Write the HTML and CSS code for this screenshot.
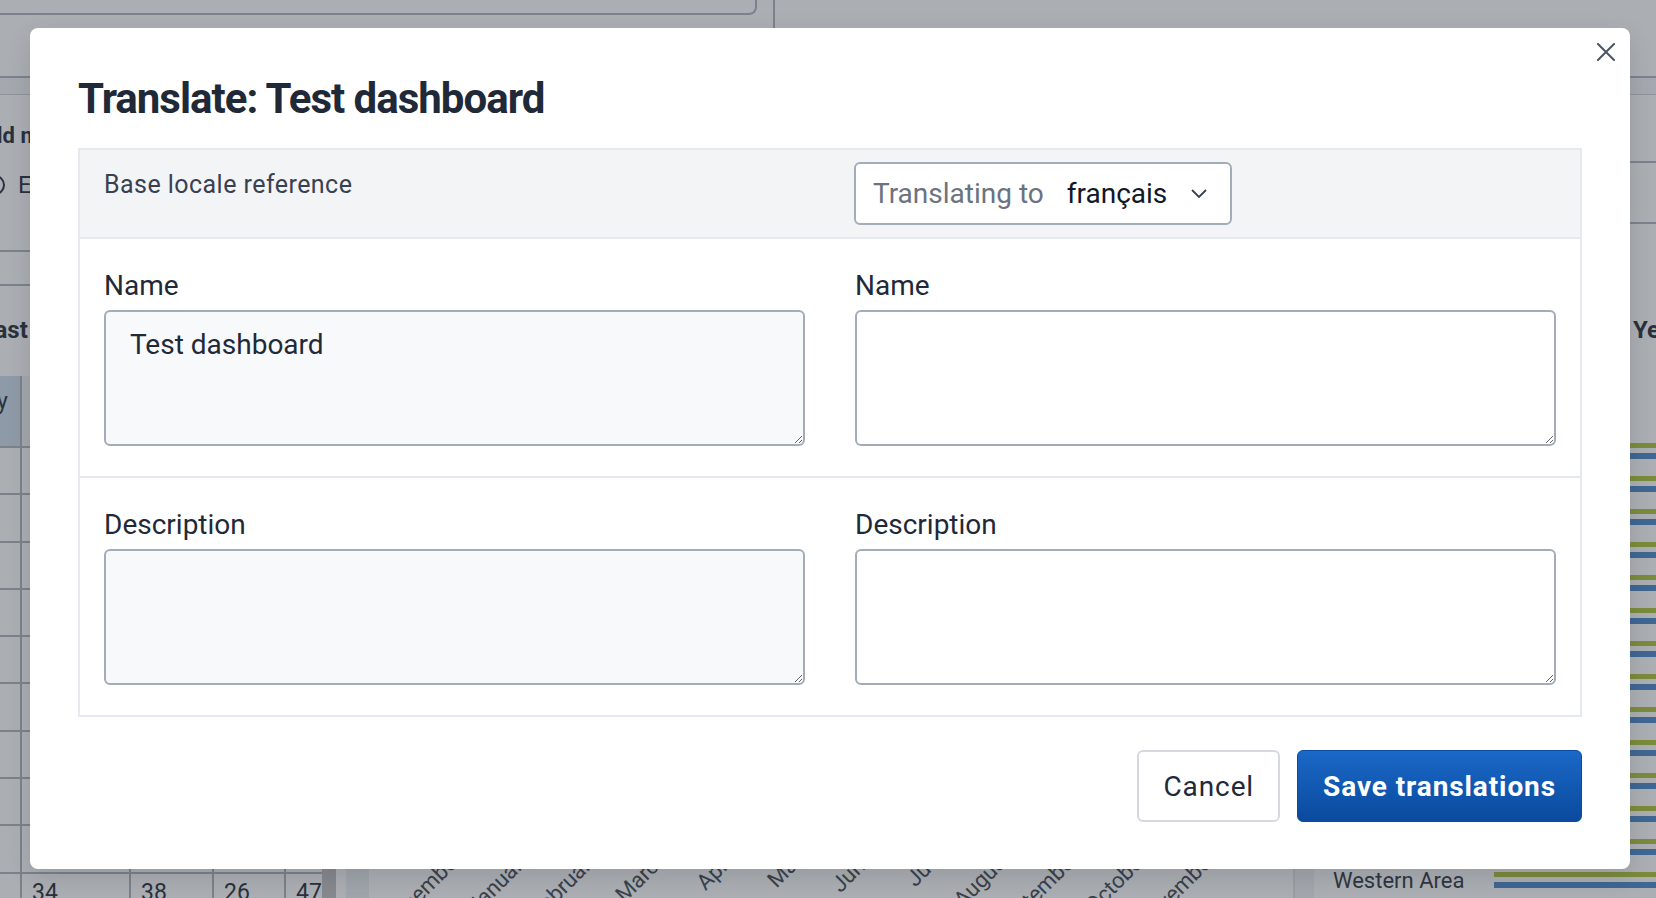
FILE: index.html
```html
<!DOCTYPE html>
<html lang="en">
<head>
<meta charset="utf-8">
<title>Translate: Test dashboard</title>
<link rel="stylesheet" href="styles.css">
</head>
<body>
<div class="dash" aria-hidden="true">
  <div class="dash-top">
    <div class="searchbox"></div>
    <div class="vline"></div>
  </div>
  <div class="tabband"></div>
  <div class="filters">
    <div class="filter-left">
      <div class="f-label">Field name</div>
      <div class="f-radio"><span class="radio"></span>Exact match</div>
      <div class="f-box"></div>
    </div>
    <div class="filter-right">
      <div class="r-box"></div>
    </div>
  </div>
  <div class="panels">
    <div class="tbl-panel">
      <div class="tbl-main">
        <div class="p-title">Forecast</div>
        <div class="tbl">
          <div class="tr th"><div class="td c0"><span>Category</span></div><div class="td c1">Jan</div><div class="td c2">Feb</div><div class="td c3">Mar</div><div class="td c4">Apr</div></div>
          <div class="tr"><div class="td c0"></div><div class="td c1">10</div><div class="td c2">16</div><div class="td c3">20</div><div class="td c4">28</div></div>
          <div class="tr"><div class="td c0"></div><div class="td c1">12</div><div class="td c2">18</div><div class="td c3">21</div><div class="td c4">30</div></div>
          <div class="tr"><div class="td c0"></div><div class="td c1">15</div><div class="td c2">22</div><div class="td c3">19</div><div class="td c4">28</div></div>
          <div class="tr"><div class="td c0"></div><div class="td c1">20</div><div class="td c2">25</div><div class="td c3">17</div><div class="td c4">33</div></div>
          <div class="tr"><div class="td c0"></div><div class="td c1">22</div><div class="td c2">27</div><div class="td c3">23</div><div class="td c4">35</div></div>
          <div class="tr"><div class="td c0"></div><div class="td c1">25</div><div class="td c2">29</div><div class="td c3">24</div><div class="td c4">38</div></div>
          <div class="tr"><div class="td c0"></div><div class="td c1">27</div><div class="td c2">31</div><div class="td c3">22</div><div class="td c4">40</div></div>
          <div class="tr"><div class="td c0"></div><div class="td c1">29</div><div class="td c2">33</div><div class="td c3">25</div><div class="td c4">42</div></div>
          <div class="tr"><div class="td c0"></div><div class="td c1">31</div><div class="td c2">35</div><div class="td c3">24</div><div class="td c4">44</div></div>
          <div class="tr"><div class="td c0"></div><div class="td c1">34</div><div class="td c2">38</div><div class="td c3">26</div><div class="td c4">47</div></div>
        </div>
      </div>
      <div class="scrollbar"></div>
    </div>
    <div class="chart-panel">
      <div class="axis-strip"></div>
      <div class="chart-area">
        <div class="chart-space"></div>
        <div class="months">
          <div class="m"><span>December</span></div>
          <div class="m"><span>January</span></div>
          <div class="m"><span>February</span></div>
          <div class="m"><span>March</span></div>
          <div class="m"><span>April</span></div>
          <div class="m"><span>May</span></div>
          <div class="m"><span>June</span></div>
          <div class="m"><span>July</span></div>
          <div class="m"><span>August</span></div>
          <div class="m"><span>September</span></div>
          <div class="m"><span>October</span></div>
          <div class="m"><span>November</span></div>
        </div>
      </div>
    </div>
    <div class="bar-panel">
      <div class="bar-strip"></div>
      <div class="bar-main">
        <div class="p-title yr">Year over year</div>
        <div class="brow"><div class="blabel">Bo</div><div class="bars"><div class="bar g"></div><div class="bar b"></div></div></div>
        <div class="brow"><div class="blabel">Bombali</div><div class="bars"><div class="bar g"></div><div class="bar b"></div></div></div>
        <div class="brow"><div class="blabel">Bonthe</div><div class="bars"><div class="bar g"></div><div class="bar b"></div></div></div>
        <div class="brow"><div class="blabel">Kailahun</div><div class="bars"><div class="bar g"></div><div class="bar b"></div></div></div>
        <div class="brow"><div class="blabel">Kambia</div><div class="bars"><div class="bar g"></div><div class="bar b"></div></div></div>
        <div class="brow"><div class="blabel">Kenema</div><div class="bars"><div class="bar g"></div><div class="bar b"></div></div></div>
        <div class="brow"><div class="blabel">Koinadugu</div><div class="bars"><div class="bar g"></div><div class="bar b"></div></div></div>
        <div class="brow"><div class="blabel">Kono</div><div class="bars"><div class="bar g"></div><div class="bar b"></div></div></div>
        <div class="brow"><div class="blabel">Moyamba</div><div class="bars"><div class="bar g"></div><div class="bar b"></div></div></div>
        <div class="brow"><div class="blabel">Port Loko</div><div class="bars"><div class="bar g"></div><div class="bar b"></div></div></div>
        <div class="brow"><div class="blabel">Pujehun</div><div class="bars"><div class="bar g"></div><div class="bar b"></div></div></div>
        <div class="brow"><div class="blabel">Tonkolili</div><div class="bars"><div class="bar g"></div><div class="bar b"></div></div></div>
        <div class="brow"><div class="blabel">Urban</div><div class="bars"><div class="bar g"></div><div class="bar b"></div></div></div>
        <div class="brow"><div class="blabel">Western Area</div><div class="bars"><div class="bar g"></div><div class="bar b"></div></div></div>
      </div>
    </div>
  </div>
</div>

<div class="overlay">
  <div class="modal" role="dialog" aria-labelledby="dlg-title">
    <button class="close" type="button" aria-label="Close">
      <svg width="18" height="18" viewBox="0 0 18 18" fill="none" stroke="#4b5563" stroke-width="2" stroke-linecap="square"><path d="M1 1 L17 17 M17 1 L1 17"/></svg>
    </button>
    <h1 class="title" id="dlg-title">Translate: Test dashboard</h1>
    <div class="panel">
      <div class="panel-head">
        <div class="base-label">Base locale reference</div>
        <div class="locale-select">
          <span class="sel-prefix">Translating to</span>
          <span class="sel-value">français</span>
          <svg class="chev" width="16" height="9" viewBox="0 0 16 9" fill="none" stroke="#374151" stroke-width="1.8"><path d="M1 1 L8 8 L15 1"/></svg>
        </div>
      </div>
      <div class="row">
        <div class="field">
          <label class="lbl">Name</label>
          <textarea class="ta ta-base" readonly>Test dashboard</textarea>
        </div>
        <div class="field">
          <label class="lbl">Name</label>
          <textarea class="ta"></textarea>
        </div>
      </div>
      <div class="row">
        <div class="field">
          <label class="lbl">Description</label>
          <textarea class="ta ta-base" readonly></textarea>
        </div>
        <div class="field">
          <label class="lbl">Description</label>
          <textarea class="ta"></textarea>
        </div>
      </div>
    </div>
    <div class="footer">
      <button class="btn btn-cancel" type="button">Cancel</button>
      <button class="btn btn-primary" type="button">Save translations</button>
    </div>
  </div>
</div>
</body>
</html>
```

FILE: styles.css
```css
* { box-sizing: border-box; }
html, body { margin: 0; padding: 0; }
body {
  width: 1656px;
  height: 898px;
  overflow: hidden;
  position: relative;
  font-family: Roboto, "Liberation Sans", Arial, sans-serif;
  background: #abafb4;
}

/* ---------- dimmed dashboard behind the dialog ---------- */
.dash {
  width: 1656px;
  height: 898px;
  overflow: hidden;
  display: flex;
  flex-direction: column;
  background: #abafb4;
  color: #2a313c;
}
.dash-top { height: 28px; display: flex; flex: none; }
.searchbox {
  width: 757px;
  height: 15px;
  border: 2px solid #7c828b;
  border-top: 0;
  border-left: 0;
  border-bottom-right-radius: 8px;
}
.vline { margin-left: 16px; width: 2px; background: #7c828b; }
.tabband {
  flex: none;
  margin-top: 48px;
  height: 19px;
  background: #a5a9af;
  border-top: 2px solid #7c828b;
  border-bottom: 1px solid #8d939b;
}
.filters { flex: none; height: 195px; display: flex; }
.filter-left { width: 774px; padding-top: 27px; }
.f-label { font-size: 22px; font-weight: 700; line-height: 28px; margin-left: -33px; }
.f-radio { margin-top: 20px; font-size: 24px; line-height: 30px; display: flex; align-items: center; gap: 13px; margin-left: -15px; }
.radio { width: 20px; height: 20px; border: 2px solid #2a313c; border-radius: 50%; }
.f-box { margin-top: 50px; height: 36px; border-top: 2px solid #7c828b; border-bottom: 2px solid #7c828b; }
.filter-right { flex: 1; padding-top: 66px; }
.r-box { height: 63px; border-top: 2px solid #7c828b; border-bottom: 2px solid #7c828b; }

.panels { flex: 1; display: flex; min-height: 0; }
.tbl-panel { width: 346px; display: flex; flex: none; }
.tbl-main { width: 322px; padding-top: 22px; overflow: hidden; }
.p-title { font-size: 24px; font-weight: 700; line-height: 36px; white-space: nowrap; margin-left: -66px; }
.tbl { margin-top: 28px; }
.tr { display: flex; height: 47.3px; border-bottom: 2px solid #7c828b; }
.th { height: 72px; background: #a3a8ae; }
.td { border-right: 2px solid #7c828b; padding: 5px 10px 0; font-size: 23px; line-height: 28px; white-space: nowrap; }
.th .td { padding-top: 12px; color: transparent; }
.c0 { width: 22px; padding: 0; }
.th .c0 {
  background: #8f9aa8;
  display: flex;
  justify-content: flex-end;
  padding: 12px 12px 0 0;
  color: #2a313c;
}
.c1 { width: 109px; }
.c2 { width: 83px; }
.c3 { width: 72px; }
.c4 { width: 36px; border-right: 0; }
.scrollbar { width: 14px; background: #86898e; }

.chart-panel { width: 947px; display: flex; flex: none; }
.axis-strip { width: 23px; background: #a0a5ac; }
.chart-area { flex: 1; display: flex; flex-direction: column; }
.chart-space { flex: 1; }
.months { height: 52px; display: flex; flex: none; }
.m { width: 68.6px; display: flex; justify-content: flex-end; }
.m span {
  display: inline-block;
  margin-right: -12px;
  font-size: 22px;
  line-height: 24px;
  color: #3a414c;
  white-space: nowrap;
  transform: rotate(-45deg);
  transform-origin: 100% 0;
}

.bar-panel { flex: 1; display: flex; }
.bar-strip { width: 21px; background: #a3a7ad; border-left: 2px solid #9a9fa6; }
.bar-main { flex: 1; padding-top: 22px; }
.yr { margin-left: 319px; margin-bottom: 87px; }
.brow { height: 33px; display: flex; }
.blabel { width: 180px; padding-left: 19px; font-size: 22px; line-height: 33px; color: #2f3642; white-space: nowrap; }
.bars { flex: 1; padding-top: 8px; display: flex; flex-direction: column; gap: 5px; }
.bar { height: 5px; width: 100%; }
.bar.g { background: #7b8b3b; }
.bar.b { height: 6px; background: #3f6792; }

/* ---------- dialog ---------- */
.overlay {
  position: absolute;
  inset: 0;
  padding: 28px 0 0 30px;
  display: flex;
  align-items: flex-start;
}
.modal {
  position: relative;
  width: 1600px;
  background: #ffffff;
  border-radius: 8px;
  padding: 46px 48px 47px;
  box-shadow: 0 8px 24px rgba(0, 0, 0, 0.12);
}
.close {
  position: absolute;
  top: 12px;
  right: 12px;
  width: 24px;
  height: 24px;
  padding: 3px;
  border: 0;
  background: none;
  display: flex;
}
.title {
  margin: 0 0 24px;
  font-size: 42px;
  line-height: 50px;
  font-weight: 700;
  letter-spacing: -1px;
  color: #1f2937;
}
.panel { border: 2px solid #e6eaef; }
.panel-head {
  display: grid;
  grid-template-columns: 1fr 1fr;
  column-gap: 50px;
  padding: 12px 24px;
  background: #f3f4f6;
  border-bottom: 2px solid #e6eaef;
}
.base-label {
  margin-top: 5px;
  font-size: 25px;
  line-height: 36px;
  letter-spacing: 0.45px;
  color: #374151;
}
.locale-select {
  width: 378px;
  height: 63px;
  margin-left: -1px;
  border: 2px solid #a3adba;
  border-radius: 6px;
  background: #ffffff;
  display: flex;
  align-items: center;
  padding: 0 23px 0 17px;
  font-size: 28px;
}
.sel-prefix { color: #6b7280; }
.sel-value { margin-left: 23px; color: #111827; }
.chev { margin-left: auto; }

.row {
  display: grid;
  grid-template-columns: 1fr 1fr;
  column-gap: 50px;
  padding: 26px 24px 30px;
}
.row + .row { border-top: 2px solid #e6eaef; }
.lbl {
  display: block;
  font-size: 28px;
  line-height: 42px;
  color: #1f2937;
  margin-bottom: 3px;
}
.ta {
  display: block;
  width: 100%;
  height: 136px;
  border: 2px solid #a3adba;
  border-radius: 6px;
  padding: 12px 24px;
  font-family: Roboto, "Liberation Sans", Arial, sans-serif;
  font-size: 28px;
  line-height: 42px;
  color: #1f2937;
  background: #ffffff;
  outline: none;
}
.ta-base { background: #f8f9fb; }

.footer {
  display: flex;
  justify-content: flex-end;
  gap: 17px;
  margin-top: 33px;
}
.btn {
  height: 72px;
  border-radius: 6px;
  font-family: Roboto, "Liberation Sans", Arial, sans-serif;
  font-size: 28px;
  letter-spacing: 0.9px;
  padding: 0 24px;
  cursor: pointer;
}
.btn-cancel {
  background: #ffffff;
  border: 2px solid #d5d9df;
  color: #1f2937;
}
.btn-primary {
  background: linear-gradient(#1a68c7, #0a4a9e);
  border: 1px solid #0b4a9c;
  color: #ffffff;
  font-weight: 700;
  padding: 0 25px;
}
```
